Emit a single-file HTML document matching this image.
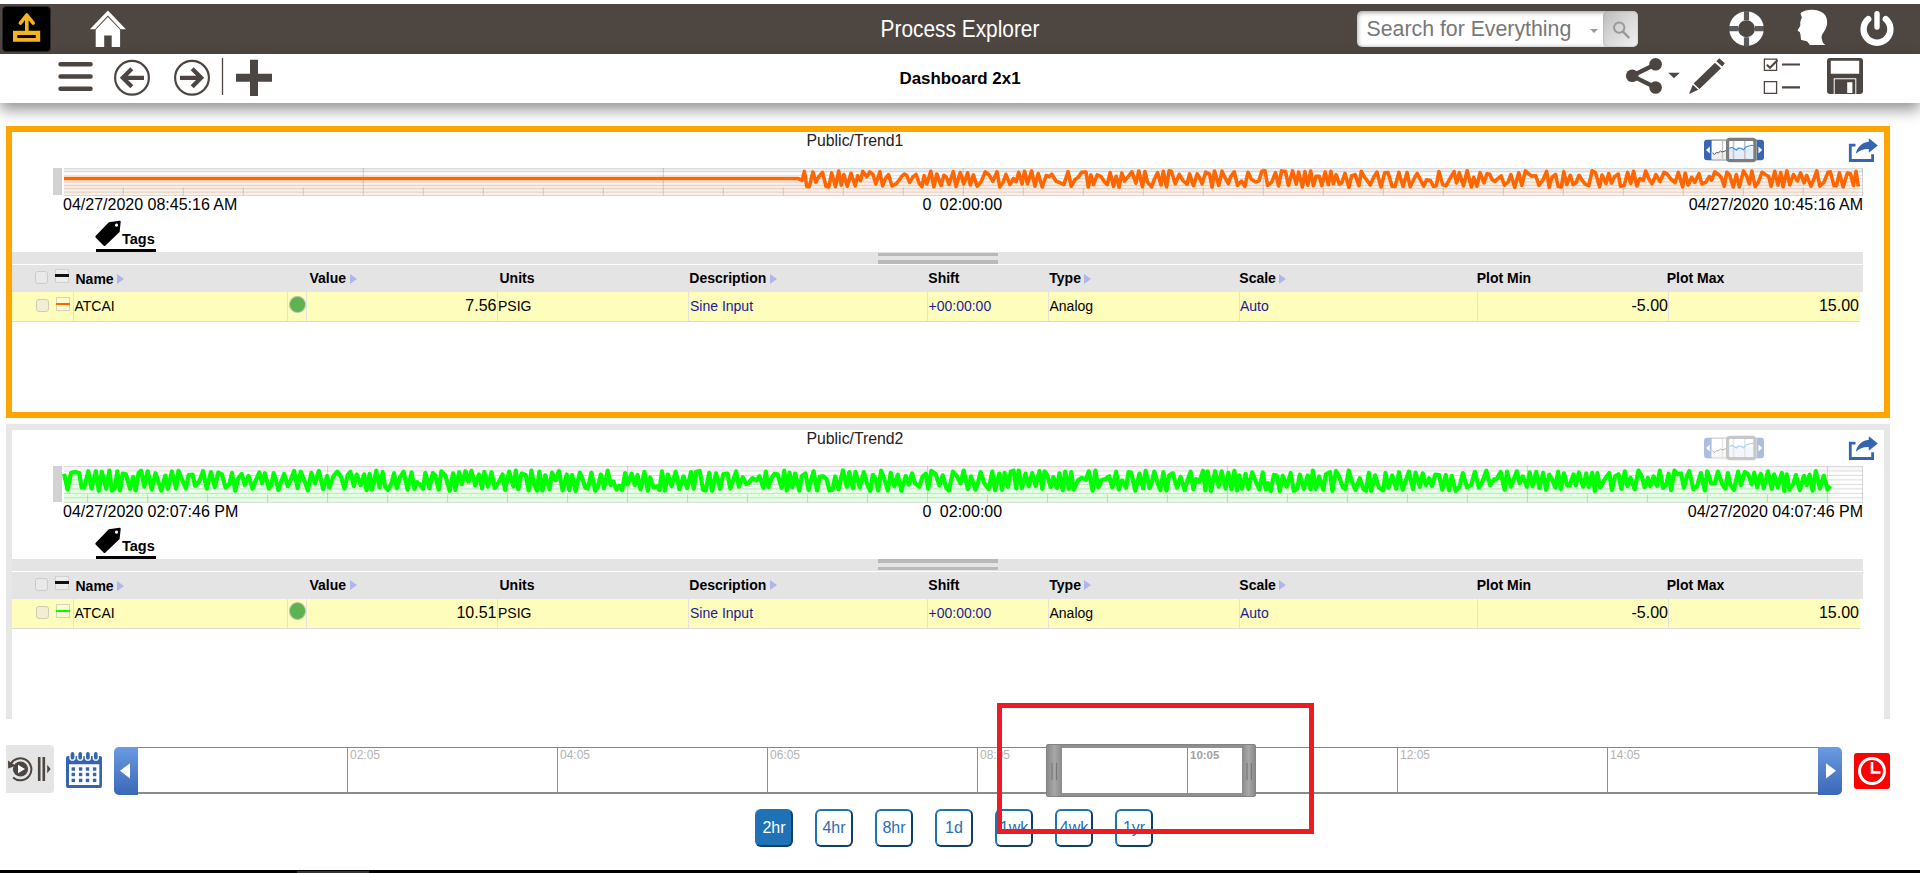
<!DOCTYPE html>
<html lang="en">
<head>
<meta charset="utf-8">
<title>Process Explorer</title>
<style>
*{box-sizing:border-box;margin:0;padding:0}
html,body{width:1920px;height:873px;overflow:hidden;background:#fff}
body{font-family:"Liberation Sans",sans-serif;color:#000;position:relative}
.abs{position:absolute}
svg{position:absolute;overflow:visible}
#topbar{position:absolute;left:0;top:4px;width:1920px;height:50px;background:#4e4640}
#upbtn{position:absolute;left:2px;top:2px;width:49px;height:46px;background:#000;border:1px solid #2c282a;border-radius:4px}
#apptitle{position:absolute;left:760px;top:13px;width:400px;text-align:center;color:#fff;font-size:24px;line-height:24px;transform:scaleX(.869);transform-origin:50% 50%;white-space:nowrap}
#search{position:absolute;left:1357px;top:7px;width:281px;height:36px;background:#fff;border-radius:5px;box-shadow:inset 0 1px 5px rgba(0,0,0,.45);overflow:hidden}
#search .ph{position:absolute;left:9.500px;top:6px;font-size:21.300px;line-height:24px;color:#777;white-space:nowrap}
#search .caret{position:absolute;left:233px;top:17.500px;width:0;height:0;border-left:4.500px solid transparent;border-right:4.500px solid transparent;border-top:4.500px solid #999}
#search .btn{position:absolute;left:246px;top:0;width:35px;height:36px;border-radius:5px;background:linear-gradient(135deg,#bcbcbc 0%,#d6d6d6 45%,#f2f2f2 100%);box-shadow:inset 0 0 2px rgba(0,0,0,.25)}
#subbar{position:absolute;left:0;top:54px;width:1920px;height:49px;background:#fff;box-shadow:0 7px 14px rgba(0,0,0,.42)}
#dashtitle{position:absolute;left:760px;top:70px;width:400px;text-align:center;font-weight:bold;font-size:16.900px;line-height:18px;color:#000}
.panel{position:absolute;left:6px;width:1884px;background:#fff;border:6px solid #ffa500}
.ptitle{position:absolute;font-size:15.800px;line-height:16px;color:#222;white-space:nowrap}
.dt{position:absolute;font-size:16px;line-height:16px;color:#000;white-space:nowrap}
.tags{position:absolute;font-weight:bold;font-size:14.500px;line-height:16px;color:#000}
.gband{position:absolute;left:12px;width:1851px;background:#e4e4e4}
.th{position:absolute;font-weight:bold;font-size:14px;line-height:14px;color:#000;white-space:nowrap}
.tri{display:inline-block;width:0;height:0;border-top:5.400px solid transparent;border-bottom:5.400px solid transparent;border-left:7px solid #aeb6ea;margin-left:3.500px;vertical-align:-0.500px}
.row{position:absolute;left:12px;width:1848px;height:30px;background:#fffdbb;border-bottom:1px solid #dcdcdc}
.vl{position:absolute;top:0;width:1px;height:29px;background:#e3e3da}
.td{position:absolute;font-size:14px;line-height:14px;color:#000;white-space:nowrap}
.num{position:absolute;font-size:16px;line-height:16px;color:#000;white-space:nowrap;text-align:right}
.lnk{color:#1a1a9e}
.cb{position:absolute;width:13px;height:13px;border:1px solid #cbcbcb;border-radius:3px;background:#e9e9e9}
.rbtn{position:absolute;top:809px;width:38px;height:38px;border:2px solid;border-color:#1f72b5 #0f3f6e #0f3f6e #1f72b5;border-radius:6px;background:#fff;color:#2a6db5;font-size:16px;line-height:34px;text-align:center}
.rbtn.on{background:#1f72b5;color:#fff}
.tick{position:absolute;top:748px;width:1px;height:45px;background:#8e8e8e}
.tl{position:absolute;top:748.700px;font-size:12px;line-height:12px;color:#b2b2b2;white-space:nowrap}
</style>
</head>
<body>

<!-- ===== top bar ===== -->
<div id="topbar">
  <div id="upbtn"></div>
  <svg style="left:0;top:-4px" width="160" height="58" viewBox="0 0 160 58">
    <!-- upload icon -->
    <g fill="none" stroke="#f2b422" stroke-width="3.6" stroke-linecap="round" stroke-linejoin="round">
      <path d="M26.800 31V15.200M20.400 23.200L26.800 15L33.200 23.200"/>
    </g>
    <path fill="#f2b422" fill-rule="evenodd" d="M13 30.8H40.2V41.8H13ZM17.3 35H35.8V38H17.3Z"/>
    <!-- home icon -->
    <path fill="#fff" d="M107.900 10.600L125.900 29.200H120.800L107.900 15.500L95 29.200H89.900Z"/>
    <path fill="#fff" fill-rule="evenodd" d="M107.900 17L120.100 29.800V47H95.700V29.800ZM104.2 35.4H111.7V47H104.2Z"/>
  </svg>
  <div id="apptitle">Process Explorer</div>
  <div id="search">
    <div class="ph">Search for Everything</div>
    <div class="caret"></div>
    <div class="btn"></div>
    <svg style="left:254px;top:8px" width="22" height="22" viewBox="0 0 22 22">
      <circle cx="8.2" cy="8.6" r="5.2" fill="none" stroke="#9a9a9a" stroke-width="2"/>
      <path d="M12 12.6L17.6 18.4" stroke="#9a9a9a" stroke-width="2.4" stroke-linecap="round"/>
    </svg>
  </div>
  <svg style="left:1720px;top:-4px" width="200" height="58" viewBox="1720 0 200 58">
    <!-- lifebuoy -->
    <circle cx="1746.5" cy="28.7" r="13" fill="none" stroke="#fff" stroke-width="9"/>
    <path d="M1746.500 11.200V20.200M1746.500 37.200V46.200M1729 28.700H1738M1755 28.700H1764" stroke="#5a5a5a" stroke-width="5.200" fill="none"/>
    <circle cx="1746.5" cy="28.7" r="17.6" fill="none" stroke="#444" stroke-opacity=".5" stroke-width="1"/>
    <!-- head -->
    <path fill="#fff" d="M1812.500 9.700C1808 9.600 1803.500 10.600 1801.300 12.600C1800.500 13.200 1800.600 13.800 1800.700 14.300L1801.900 17.500C1801 19.500 1800.400 21 1800.200 22.900L1800.300 25.700L1797.600 30.300C1797.800 31 1799 31.500 1799.900 32.300L1800.500 34.900L1801 39.200C1801.100 39.800 1801.300 40 1801.600 40.100L1806.800 41.200C1808 42 1809 43.500 1809.900 44.900L1825.400 44.900C1823.500 44 1822.500 42.500 1822.200 40.600C1821.800 39 1821.400 38 1821.600 36.600C1822 34 1824 32 1825.100 29.800C1826.500 27 1827.200 24.500 1827.100 22.300C1827.100 20.500 1826.900 19 1826.200 17.200C1825.300 15 1824 13.700 1822.200 12.600C1820.500 11.400 1818.800 10.800 1817 10.300C1815.500 9.900 1814 9.700 1812.500 9.700Z"/>
    <!-- power -->
    <path fill="none" stroke="#fff" stroke-width="6.4" stroke-linecap="round" d="M1868.2 19.200a13.400 13.400 0 1 0 17.600 0"/>
    <path fill="none" stroke="#fff" stroke-width="5.4" stroke-linecap="round" d="M1877 13.800V27"/>
  </svg>
</div>

<!-- ===== sub bar ===== -->
<div id="subbar"></div>
<svg style="left:0;top:54px" width="300" height="50" viewBox="0 54 300 50">
  <g stroke="#4d4541" fill="none">
    <path stroke-width="4.4" stroke-linecap="round" d="M60.500 64.300H90.600M60.500 76.500H90.600M60.500 88.800H90.600"/>
    <circle cx="132" cy="77.800" r="16.900" stroke-width="2.200"/>
    <path stroke-width="4.200" d="M144 77.800H123M131.800 68.800L122.800 77.800L131.800 86.800"/>
    <circle cx="192" cy="77.800" r="16.900" stroke-width="2.200"/>
    <path stroke-width="4.200" d="M180 77.800H201M192.200 68.800L201.200 77.800L192.200 86.800"/>
    <path stroke-width="1.300" d="M222.500 58V95"/>
    <path stroke-width="8" d="M236 77.800H272M254 59.800V96"/>
  </g>
</svg>
<div id="dashtitle">Dashboard 2x1</div>
<svg style="left:1600px;top:54px" width="300" height="50" viewBox="1600 54 300 50">
  <g fill="#4d4541" stroke="none">
    <!-- share -->
    <circle cx="1655.6" cy="64.200" r="6.300"/><circle cx="1632.200" cy="75.800" r="6.300"/><circle cx="1655.600" cy="87.500" r="6.300"/>
    <path fill="none" stroke="#4d4541" stroke-width="4.300" d="M1655.600 64.200L1632.200 75.800L1655.600 87.500"/>
    <path d="M1668.200 72.700H1679.800L1674 78.300Z"/>
    <!-- pencil -->
    <path d="M1719.300 58.300L1724.800 63.300L1722.300 66.600L1716.300 61.300ZM1715 62.800L1721 68.200L1699.500 88.900L1693.600 83.600ZM1692.800 84.800L1698.300 89.800L1689 94.100Z"/>
    <!-- checklist -->
    <path fill="none" stroke="#4d4541" stroke-width="1.300" d="M1764.400 59.200H1776.600V70.400H1764.400ZM1764.400 81.700H1776.600V93.300H1764.400Z"/>
    <path fill="none" stroke="#4d4541" stroke-width="2" d="M1766.800 64.800L1770 67.800L1777.600 60"/>
    <path fill="none" stroke="#4d4541" stroke-width="2.200" d="M1782 64.500H1800M1782 87.300H1800"/>
    <!-- save -->
    <path fill-rule="evenodd" d="M1830 58H1860a3 3 0 0 1 3 3V91a3 3 0 0 1-3 3H1830a3 3 0 0 1-3-3V61a3 3 0 0 1 3-3ZM1830.800 60.700H1859.200V73.700H1830.800ZM1833.700 78.300H1856.300V94H1833.700Z"/>
    <path fill-rule="evenodd" d="M1834.700 79.300H1855.300V94H1834.700ZM1847.200 82.300H1852.400V93H1847.200Z"/>
  </g>
</svg>

<!-- ===== panel 1 ===== -->
<div class="panel" style="top:126px;height:292px;border-color:#ffa500"></div>
<div class="ptitle" style="left:806.500px;top:132.5px">Public/Trend1</div>
<svg style="left:1700px;top:136px;opacity:1" width="70" height="30" viewBox="1700 136 70 30">
<rect x="1704" y="139.7" width="60" height="20.600" rx="3" fill="#3865b4"/>
<rect x="1711.700" y="139.7" width="44.800" height="20.600" fill="#9a9a9a"/>
<rect x="1711.700" y="140.8" width="44.800" height="18.500" fill="#fff"/>
<rect x="1711.700" y="152" width="16" height="7.300" fill="#eee"/>
<path d="M1722.500 141V159.3" stroke="#c4c4c4" stroke-width="1.300"/>
<path d="M1712.500 153L1714.500 154.5L1716.500 152.5L1718.500 152.8L1720.500 151L1722 152L1727 150.3" fill="none" stroke="#555" stroke-width="1"/>
<rect x="1729.500" y="148.5" width="24" height="11" fill="#e3edfb"/>
<path d="M1733.500 141V159.3M1744.800 141V159.3" stroke="#c4c4c4" stroke-width="1.600"/>
<path d="M1729.500 148.5L1731.500 147.3L1733.500 148.2L1736.500 150L1738.500 148L1741 148.3L1743.500 149.8L1746 147L1749 146L1752 145.3L1753.500 145.8" fill="none" stroke="#2b8cf0" stroke-width="1.100"/>
<rect x="1727.600" y="139.4" width="27.300" height="21.300" rx="2.500" fill="none" stroke="#7c7c7c" stroke-width="3.200"/>
<path d="M1706 150L1709.800 146.5V153.5ZM1762.200 150L1758.400 146.5V153.5Z" fill="#fff"/>
</svg>
<svg style="left:1846px;top:136px" width="36" height="30" viewBox="1846 136 36 30">
<path d="M1855.500 145.2H1850.300V160.5H1872.600V154.3" fill="none" stroke="#3565b0" stroke-width="2.800"/>
<path d="M1877.800 145.4L1868.800 138.2V141.8C1861.500 142.6 1857 147.5 1855.800 153.8C1859.500 150.3 1863.500 148.8 1868.800 149V152.8Z" fill="#3565b0"/>
</svg>
<div class="abs" style="left:52.500px;top:168px;width:9.500px;height:27.0px;background:#d2d2d2"></div>
<svg style="left:64px;top:168px" width="1799" height="28.5" viewBox="0 0 1799 28.5">
<rect x="0" y="0" width="1799" height="27.5" fill="#fff"/>
<rect x="0" y="1" width="1799" height="3" fill="#ececec"/>
<polygon points="0.0,10.5 734.0,10.5 738.0,12.4 740.4,3.4 742.8,18.5 745.3,18.6 748.9,4.0 751.9,14.2 754.5,9.2 758.5,4.3 762.0,18.3 764.8,18.9 767.7,4.9 771.4,18.6 774.7,3.1 777.3,17.1 779.9,6.6 783.3,18.2 787.0,5.3 791.2,17.8 793.6,7.8 796.5,12.6 798.8,3.4 802.7,8.7 805.8,3.9 809.0,6.4 811.8,16.0 815.9,3.8 818.6,17.9 821.5,10.3 824.5,6.6 828.0,18.0 832.1,15.9 835.2,12.2 837.7,8.3 840.3,6.1 842.6,7.3 845.6,14.4 849.1,8.7 852.1,6.5 855.4,15.6 857.9,18.7 860.2,7.7 862.8,16.0 866.8,3.3 869.9,18.8 872.8,6.0 877.1,17.5 879.9,7.3 882.2,9.0 885.0,16.4 889.3,3.6 892.1,18.6 896.2,4.5 899.8,15.9 903.6,4.8 906.3,16.9 909.4,6.9 913.1,18.2 917.0,14.0 921.3,3.9 924.7,6.5 928.9,13.2 933.0,3.8 935.8,19.0 938.9,14.8 941.9,6.3 946.0,16.5 949.4,10.5 952.1,13.7 954.7,4.3 958.1,15.9 960.6,3.2 963.5,15.8 967.6,3.0 970.9,18.2 974.2,5.5 978.2,19.0 982.2,7.5 985.4,8.6 987.8,6.2 991.9,13.0 995.5,14.5 999.8,16.7 1004.1,3.6 1007.2,18.3 1011.0,11.5 1014.1,9.5 1017.7,4.3 1022.0,4.0 1024.3,19.0 1026.9,6.9 1029.5,16.6 1033.2,6.9 1036.9,8.4 1040.8,14.3 1043.2,16.5 1046.2,4.7 1049.5,18.3 1052.2,8.3 1055.1,19.1 1057.8,5.0 1060.6,13.1 1064.0,8.9 1067.9,3.8 1071.9,15.2 1074.8,3.0 1078.4,18.7 1080.9,3.5 1083.5,14.1 1087.5,18.8 1090.7,10.5 1093.6,4.7 1097.0,17.0 1099.3,3.3 1102.6,18.9 1105.1,2.8 1107.4,3.2 1111.2,15.7 1115.3,6.3 1119.0,12.5 1123.0,16.2 1125.6,5.9 1129.5,17.6 1133.2,5.9 1135.6,9.7 1138.1,15.8 1141.7,4.1 1145.6,6.0 1148.1,19.1 1150.5,3.0 1154.8,17.4 1158.0,3.2 1160.5,8.7 1164.3,15.6 1166.6,8.9 1170.2,3.8 1173.5,17.3 1177.5,13.1 1180.8,18.4 1184.0,4.4 1187.4,11.2 1191.6,13.9 1194.9,13.1 1197.7,3.4 1201.0,2.9 1203.6,17.2 1207.4,14.6 1211.5,4.6 1214.6,17.9 1217.6,2.9 1221.6,3.6 1224.4,17.5 1228.6,2.9 1232.2,16.1 1234.6,4.0 1238.4,19.0 1240.9,3.6 1243.8,17.2 1246.7,3.1 1249.4,17.7 1252.1,8.3 1255.3,8.2 1257.8,17.6 1261.2,3.9 1264.4,16.7 1266.8,3.2 1269.3,15.6 1272.2,6.6 1275.4,16.1 1277.7,14.9 1281.0,5.4 1284.9,19.2 1287.7,7.8 1291.1,6.7 1294.9,17.7 1297.3,3.4 1300.2,8.7 1303.8,13.3 1306.2,16.9 1309.7,9.2 1312.9,4.1 1317.0,19.0 1320.7,4.8 1324.0,4.6 1328.1,18.2 1331.1,18.5 1334.9,4.4 1339.1,18.4 1343.0,4.5 1346.2,18.7 1350.4,10.0 1353.2,5.5 1355.6,10.0 1359.7,18.2 1362.6,11.8 1366.4,12.5 1369.5,18.4 1372.3,17.8 1374.9,3.5 1378.8,16.8 1382.1,17.7 1386.2,10.2 1390.1,3.6 1392.5,14.9 1395.3,4.7 1399.5,17.8 1403.2,2.8 1407.4,19.0 1409.7,9.3 1412.8,18.2 1416.1,4.7 1420.0,14.9 1423.0,5.8 1425.7,6.3 1428.1,11.5 1431.0,13.4 1433.5,11.0 1437.2,8.0 1440.4,17.2 1444.0,14.1 1446.9,6.7 1450.7,19.2 1454.7,4.8 1457.8,17.3 1461.4,2.9 1464.7,5.9 1467.6,8.1 1471.8,7.7 1474.9,17.3 1479.0,11.9 1482.6,3.4 1485.2,19.1 1487.9,9.4 1491.5,6.3 1494.2,18.3 1497.3,18.9 1499.8,3.7 1502.7,16.7 1506.2,7.3 1509.2,16.6 1511.9,14.7 1515.0,7.3 1517.7,11.5 1521.2,16.2 1524.8,17.7 1528.1,2.8 1531.4,4.5 1535.6,18.8 1538.0,7.1 1542.0,15.5 1544.7,5.6 1547.4,15.1 1550.5,8.7 1554.3,6.1 1556.6,18.3 1560.1,17.6 1563.6,4.4 1566.8,15.6 1569.6,3.3 1572.8,18.0 1575.9,10.5 1579.3,12.3 1581.7,3.0 1585.0,11.0 1588.1,15.8 1591.9,6.7 1596.1,13.6 1600.0,4.4 1603.0,5.8 1606.9,11.0 1611.1,14.5 1614.4,4.4 1618.6,18.8 1621.2,5.2 1624.2,17.1 1627.7,9.3 1630.8,14.2 1635.0,5.7 1637.7,15.8 1641.6,14.4 1645.3,8.6 1647.6,12.1 1650.8,3.9 1654.4,6.4 1657.4,9.7 1660.2,18.3 1662.9,4.2 1665.7,7.3 1669.2,19.0 1672.3,6.6 1675.3,18.9 1679.5,2.9 1682.9,8.5 1685.3,15.9 1687.9,3.1 1691.2,18.6 1694.1,14.6 1698.0,4.3 1702.0,7.0 1704.7,8.5 1707.1,18.3 1710.8,3.3 1713.9,17.2 1716.8,4.6 1719.1,18.8 1722.9,2.9 1725.8,16.9 1729.4,6.5 1733.4,12.9 1736.6,4.8 1740.1,14.8 1742.7,7.4 1746.9,18.2 1749.2,12.8 1752.8,2.9 1755.8,18.2 1759.9,14.4 1764.0,4.2 1766.4,3.9 1770.0,17.7 1772.5,17.6 1775.4,4.8 1779.1,18.9 1783.4,5.0 1786.5,5.7 1789.5,17.4 1792.0,3.2 1794.3,18.6 1794.3,27.5 0.0,27.5" fill="rgba(255,102,0,.11)"/>
<path d="M0 0.50H1799M0 3.88H1799M0 7.25H1799M0 10.62H1799M0 14.00H1799M0 17.38H1799M0 20.75H1799M0 24.12H1799M0 27.50H1799" stroke="#808080" stroke-opacity=".28" stroke-width="1" fill="none"/>
<path d="M299.3 0V27.5M599.3 0V27.5M899.3 0V27.5M1199.3 0V27.5M1499.3 0V27.5M59.3 19.5V27.5M119.3 19.5V27.5M179.3 19.5V27.5M239.3 19.5V27.5M299.3 19.5V27.5M359.3 19.5V27.5M419.3 19.5V27.5M479.3 19.5V27.5M539.3 19.5V27.5M599.3 19.5V27.5M659.3 19.5V27.5M719.3 19.5V27.5M779.3 19.5V27.5M839.3 19.5V27.5M899.3 19.5V27.5M959.3 19.5V27.5M1019.3 19.5V27.5M1079.3 19.5V27.5M1139.3 19.5V27.5M1199.3 19.5V27.5M1259.3 19.5V27.5M1319.3 19.5V27.5M1379.3 19.5V27.5M1439.3 19.5V27.5M1499.3 19.5V27.5M1559.3 19.5V27.5M1619.3 19.5V27.5M1679.3 19.5V27.5M1739.3 19.5V27.5" stroke="#808080" stroke-opacity=".3" stroke-width="1.100" fill="none"/>
<path d="M1798.5 0V27.5" stroke="#808080" stroke-opacity=".3" stroke-width="1" fill="none"/>
<polyline points="0.0,10.5 734.0,10.5 738.0,12.4 740.4,3.4 742.8,18.5 745.3,18.6 748.9,4.0 751.9,14.2 754.5,9.2 758.5,4.3 762.0,18.3 764.8,18.9 767.7,4.9 771.4,18.6 774.7,3.1 777.3,17.1 779.9,6.6 783.3,18.2 787.0,5.3 791.2,17.8 793.6,7.8 796.5,12.6 798.8,3.4 802.7,8.7 805.8,3.9 809.0,6.4 811.8,16.0 815.9,3.8 818.6,17.9 821.5,10.3 824.5,6.6 828.0,18.0 832.1,15.9 835.2,12.2 837.7,8.3 840.3,6.1 842.6,7.3 845.6,14.4 849.1,8.7 852.1,6.5 855.4,15.6 857.9,18.7 860.2,7.7 862.8,16.0 866.8,3.3 869.9,18.8 872.8,6.0 877.1,17.5 879.9,7.3 882.2,9.0 885.0,16.4 889.3,3.6 892.1,18.6 896.2,4.5 899.8,15.9 903.6,4.8 906.3,16.9 909.4,6.9 913.1,18.2 917.0,14.0 921.3,3.9 924.7,6.5 928.9,13.2 933.0,3.8 935.8,19.0 938.9,14.8 941.9,6.3 946.0,16.5 949.4,10.5 952.1,13.7 954.7,4.3 958.1,15.9 960.6,3.2 963.5,15.8 967.6,3.0 970.9,18.2 974.2,5.5 978.2,19.0 982.2,7.5 985.4,8.6 987.8,6.2 991.9,13.0 995.5,14.5 999.8,16.7 1004.1,3.6 1007.2,18.3 1011.0,11.5 1014.1,9.5 1017.7,4.3 1022.0,4.0 1024.3,19.0 1026.9,6.9 1029.5,16.6 1033.2,6.9 1036.9,8.4 1040.8,14.3 1043.2,16.5 1046.2,4.7 1049.5,18.3 1052.2,8.3 1055.1,19.1 1057.8,5.0 1060.6,13.1 1064.0,8.9 1067.9,3.8 1071.9,15.2 1074.8,3.0 1078.4,18.7 1080.9,3.5 1083.5,14.1 1087.5,18.8 1090.7,10.5 1093.6,4.7 1097.0,17.0 1099.3,3.3 1102.6,18.9 1105.1,2.8 1107.4,3.2 1111.2,15.7 1115.3,6.3 1119.0,12.5 1123.0,16.2 1125.6,5.9 1129.5,17.6 1133.2,5.9 1135.6,9.7 1138.1,15.8 1141.7,4.1 1145.6,6.0 1148.1,19.1 1150.5,3.0 1154.8,17.4 1158.0,3.2 1160.5,8.7 1164.3,15.6 1166.6,8.9 1170.2,3.8 1173.5,17.3 1177.5,13.1 1180.8,18.4 1184.0,4.4 1187.4,11.2 1191.6,13.9 1194.9,13.1 1197.7,3.4 1201.0,2.9 1203.6,17.2 1207.4,14.6 1211.5,4.6 1214.6,17.9 1217.6,2.9 1221.6,3.6 1224.4,17.5 1228.6,2.9 1232.2,16.1 1234.6,4.0 1238.4,19.0 1240.9,3.6 1243.8,17.2 1246.7,3.1 1249.4,17.7 1252.1,8.3 1255.3,8.2 1257.8,17.6 1261.2,3.9 1264.4,16.7 1266.8,3.2 1269.3,15.6 1272.2,6.6 1275.4,16.1 1277.7,14.9 1281.0,5.4 1284.9,19.2 1287.7,7.8 1291.1,6.7 1294.9,17.7 1297.3,3.4 1300.2,8.7 1303.8,13.3 1306.2,16.9 1309.7,9.2 1312.9,4.1 1317.0,19.0 1320.7,4.8 1324.0,4.6 1328.1,18.2 1331.1,18.5 1334.9,4.4 1339.1,18.4 1343.0,4.5 1346.2,18.7 1350.4,10.0 1353.2,5.5 1355.6,10.0 1359.7,18.2 1362.6,11.8 1366.4,12.5 1369.5,18.4 1372.3,17.8 1374.9,3.5 1378.8,16.8 1382.1,17.7 1386.2,10.2 1390.1,3.6 1392.5,14.9 1395.3,4.7 1399.5,17.8 1403.2,2.8 1407.4,19.0 1409.7,9.3 1412.8,18.2 1416.1,4.7 1420.0,14.9 1423.0,5.8 1425.7,6.3 1428.1,11.5 1431.0,13.4 1433.5,11.0 1437.2,8.0 1440.4,17.2 1444.0,14.1 1446.9,6.7 1450.7,19.2 1454.7,4.8 1457.8,17.3 1461.4,2.9 1464.7,5.9 1467.6,8.1 1471.8,7.7 1474.9,17.3 1479.0,11.9 1482.6,3.4 1485.2,19.1 1487.9,9.4 1491.5,6.3 1494.2,18.3 1497.3,18.9 1499.8,3.7 1502.7,16.7 1506.2,7.3 1509.2,16.6 1511.9,14.7 1515.0,7.3 1517.7,11.5 1521.2,16.2 1524.8,17.7 1528.1,2.8 1531.4,4.5 1535.6,18.8 1538.0,7.1 1542.0,15.5 1544.7,5.6 1547.4,15.1 1550.5,8.7 1554.3,6.1 1556.6,18.3 1560.1,17.6 1563.6,4.4 1566.8,15.6 1569.6,3.3 1572.8,18.0 1575.9,10.5 1579.3,12.3 1581.7,3.0 1585.0,11.0 1588.1,15.8 1591.9,6.7 1596.1,13.6 1600.0,4.4 1603.0,5.8 1606.9,11.0 1611.1,14.5 1614.4,4.4 1618.6,18.8 1621.2,5.2 1624.2,17.1 1627.7,9.3 1630.8,14.2 1635.0,5.7 1637.7,15.8 1641.6,14.4 1645.3,8.6 1647.6,12.1 1650.8,3.9 1654.4,6.4 1657.4,9.7 1660.2,18.3 1662.9,4.2 1665.7,7.3 1669.2,19.0 1672.3,6.6 1675.3,18.9 1679.5,2.9 1682.9,8.5 1685.3,15.9 1687.9,3.1 1691.2,18.6 1694.1,14.6 1698.0,4.3 1702.0,7.0 1704.7,8.5 1707.1,18.3 1710.8,3.3 1713.9,17.2 1716.8,4.6 1719.1,18.8 1722.9,2.9 1725.8,16.9 1729.4,6.5 1733.4,12.9 1736.6,4.8 1740.1,14.8 1742.7,7.4 1746.9,18.2 1749.2,12.8 1752.8,2.9 1755.8,18.2 1759.9,14.4 1764.0,4.2 1766.4,3.9 1770.0,17.7 1772.5,17.6 1775.4,4.8 1779.1,18.9 1783.4,5.0 1786.5,5.7 1789.5,17.4 1792.0,3.2 1794.3,18.6" fill="none" stroke="#ff6600" stroke-width="3.6" stroke-linejoin="round" stroke-linecap="butt"/>
</svg>
<div class="dt" style="left:63px;top:197.0px">04/27/2020 08:45:16 AM</div>
<div class="dt" style="left:922.500px;top:197.0px;word-spacing:4px">0 02:00:00</div>
<div class="dt" style="right:57px;top:197.0px">04/27/2020 10:45:16 AM</div>
<svg style="left:94px;top:220.0px" width="30" height="28" viewBox="0 0 30 28"><path fill-rule="evenodd" d="M14.800 2.200L25.400 .8a1.200 1.200 0 0 1 1.300 1.300L25.600 12L11.500 25.600a1.400 1.400 0 0 1-2 0L1.800 17.800a1.400 1.400 0 0 1 0-2ZM22.500 3.600a1.600 1.600 0 1 0 .01 0Z" fill="#000"/></svg>
<div class="tags" style="left:122px;top:231.0px">Tags</div>
<div class="abs" style="left:96px;top:249.0px;width:60px;height:3px;background:#000"></div>
<div class="gband" style="top:252.0px;height:12px"></div>
<div class="abs" style="left:878px;top:252.5px;width:120px;height:3.500px;background:#b9b9b9"></div>
<div class="abs" style="left:878px;top:260.0px;width:120px;height:3.500px;background:#b9b9b9"></div>
<div class="gband" style="top:265.3px;height:26.500px"></div>
<div class="cb" style="left:35px;top:271.3px"></div>
<div class="abs" style="left:54.500px;top:269.3px;width:14.500px;height:14px;background:#ececec;border:1px solid #d0d0d0"></div>
<div class="abs" style="left:54.500px;top:274.3px;width:14.500px;height:3px;background:#111"></div>
<div class="th" style="left:75.5px;top:271.8px">Name<i class="tri"></i></div>
<div class="th" style="left:309.5px;top:271.1px">Value<i class="tri"></i></div>
<div class="th" style="left:499.5px;top:271.1px">Units</div>
<div class="th" style="left:689.3px;top:271.1px">Description<i class="tri"></i></div>
<div class="th" style="left:928.3px;top:271.1px">Shift</div>
<div class="th" style="left:1049.3px;top:271.1px">Type<i class="tri"></i></div>
<div class="th" style="left:1239.3px;top:271.1px">Scale<i class="tri"></i></div>
<div class="th" style="left:1476.7px;top:271.1px">Plot Min</div>
<div class="th" style="left:1666.7px;top:271.1px">Plot Max</div>
<div class="row" style="top:291.8px">
<i class="vl" style="left:61px"></i>
<i class="vl" style="left:275px"></i>
<i class="vl" style="left:294px"></i>
<i class="vl" style="left:485px"></i>
<i class="vl" style="left:676px"></i>
<i class="vl" style="left:915px"></i>
<i class="vl" style="left:1036px"></i>
<i class="vl" style="left:1227px"></i>
<i class="vl" style="left:1465px"></i>
<i class="vl" style="left:1656px"></i>
</div>
<div class="cb" style="left:36px;top:299.3px;background:#f1eed2;border-color:#cfcdb8"></div>
<div class="abs" style="left:55.500px;top:297.3px;width:14px;height:14px;background:#fdfad0;border:1px solid #d6d4b8"></div>
<div class="abs" style="left:55.500px;top:302.8px;width:14px;height:2.600px;background:#ff6600"></div>
<div class="td" style="left:74.500px;top:299.0px">ATCAI</div>
<div class="abs" style="left:288.500px;top:295.6px;width:17px;height:17.400px;border-radius:50%;background:#5cb350;border:1px solid #c2c2b4"></div>
<div class="num" style="right:1423.5px;top:298.3px">7.56</div>
<div class="td" style="left:498px;top:299.0px">PSIG</div>
<div class="td lnk" style="left:690px;top:299.0px">Sine Input</div>
<div class="td lnk" style="left:928.500px;top:299.0px">+00:00:00</div>
<div class="td" style="left:1049.500px;top:299.0px">Analog</div>
<div class="td lnk" style="left:1240px;top:299.0px">Auto</div>
<div class="num" style="right:252px;top:298.3px">-5.00</div>
<div class="num" style="right:61px;top:298.3px">15.00</div>

<!-- ===== panel 2 (clipped at y=719) ===== -->
<div class="abs" style="left:0;top:0;width:1920px;height:719px;overflow:hidden;pointer-events:none">
<div class="panel" style="top:424px;height:320px;border-color:#e7e7e7"></div>
<div class="ptitle" style="left:806.500px;top:430.5px">Public/Trend2</div>
<svg style="left:1700px;top:434px;opacity:0.42" width="70" height="30" viewBox="1700 434 70 30">
<rect x="1704" y="437.7" width="60" height="20.600" rx="3" fill="#3865b4"/>
<rect x="1711.700" y="437.7" width="44.800" height="20.600" fill="#9a9a9a"/>
<rect x="1711.700" y="438.8" width="44.800" height="18.500" fill="#fff"/>
<rect x="1711.700" y="450" width="16" height="7.300" fill="#eee"/>
<path d="M1722.500 439V457.3" stroke="#c4c4c4" stroke-width="1.300"/>
<path d="M1712.500 451L1714.500 452.5L1716.500 450.5L1718.500 450.8L1720.500 449L1722 450L1727 448.3" fill="none" stroke="#555" stroke-width="1"/>
<rect x="1729.500" y="446.5" width="24" height="11" fill="#e3edfb"/>
<path d="M1733.500 439V457.3M1744.800 439V457.3" stroke="#c4c4c4" stroke-width="1.600"/>
<path d="M1729.500 446.5L1731.500 445.3L1733.500 446.2L1736.500 448L1738.500 446L1741 446.3L1743.500 447.8L1746 445L1749 444L1752 443.3L1753.500 443.8" fill="none" stroke="#2b8cf0" stroke-width="1.100"/>
<rect x="1727.600" y="437.4" width="27.300" height="21.300" rx="2.500" fill="none" stroke="#7c7c7c" stroke-width="3.200"/>
<path d="M1706 448L1709.800 444.5V451.5ZM1762.200 448L1758.400 444.5V451.5Z" fill="#fff"/>
</svg>
<svg style="left:1846px;top:434px" width="36" height="30" viewBox="1846 434 36 30">
<path d="M1855.500 443.2H1850.300V458.5H1872.600V452.3" fill="none" stroke="#3565b0" stroke-width="2.800"/>
<path d="M1877.800 443.4L1868.800 436.2V439.8C1861.500 440.6 1857 445.5 1855.800 451.8C1859.500 448.3 1863.500 446.8 1868.800 447V450.8Z" fill="#3565b0"/>
</svg>
<div class="abs" style="left:52.500px;top:466px;width:9.500px;height:35.8px;background:#d2d2d2"></div>
<svg style="left:64px;top:466px" width="1799" height="37.3" viewBox="0 0 1799 37.3">
<rect x="0" y="0" width="1799" height="36.3" fill="#fff"/>
<rect x="0" y="1" width="1799" height="3" fill="#f6f6f6"/>
<polygon points="0.0,7.8 3.5,23.4 7.0,6.8 11.0,6.1 15.2,7.1 17.5,21.3 20.2,21.5 24.2,5.2 27.5,22.5 31.8,5.2 34.7,24.8 37.8,5.7 42.1,22.8 45.3,4.5 47.7,24.6 50.7,22.5 53.2,5.4 55.9,24.4 58.6,7.7 61.7,8.0 66.0,22.8 69.0,11.0 71.5,24.5 74.5,7.0 77.0,4.7 80.2,20.6 83.6,5.3 87.6,23.4 91.4,7.2 94.9,17.5 97.2,24.7 101.2,9.6 103.8,22.9 107.8,5.5 112.0,22.5 114.4,4.8 117.8,13.2 121.9,22.3 124.5,9.2 128.6,8.7 131.0,19.8 135.3,15.3 139.0,5.1 142.7,22.5 146.9,6.1 150.7,21.0 154.2,6.5 157.8,8.4 161.5,21.5 165.5,17.7 167.9,6.9 171.2,24.8 174.0,12.5 177.6,8.0 180.8,18.8 184.5,9.9 188.5,22.6 191.5,14.8 195.4,6.4 198.1,17.3 200.8,7.2 204.8,22.4 207.2,19.1 209.6,7.1 211.9,14.3 214.3,23.9 216.9,16.3 220.1,7.9 223.7,20.2 226.4,14.5 230.1,4.9 233.5,22.1 236.6,5.7 240.3,14.3 243.8,24.3 247.3,6.8 250.9,17.5 254.8,5.0 259.1,22.9 263.0,10.0 265.4,21.6 269.3,10.4 273.2,5.6 277.0,10.7 280.4,22.4 283.7,8.8 286.4,5.8 289.8,19.9 292.7,8.5 296.7,19.2 300.1,8.3 302.5,24.2 305.6,8.0 308.0,23.6 312.2,4.9 315.4,21.4 318.6,6.1 321.2,20.8 323.9,24.0 327.4,17.5 330.0,7.2 332.7,22.1 336.0,11.4 339.6,5.7 343.6,23.6 347.5,6.4 350.4,22.8 353.0,16.1 355.8,18.6 359.0,22.7 361.3,6.9 365.4,22.2 368.7,7.1 371.2,9.5 374.6,23.4 377.3,5.3 381.4,9.7 385.6,24.8 389.0,7.4 391.3,23.9 395.1,6.2 397.7,18.2 401.4,5.2 404.5,15.7 407.4,4.8 411.2,19.3 414.9,8.4 418.0,22.4 420.3,5.8 423.9,20.5 427.5,6.2 430.6,21.9 434.8,16.1 438.6,8.5 441.0,24.0 445.1,5.6 449.4,20.4 451.8,4.6 454.2,23.1 457.5,7.6 461.7,8.9 464.6,24.4 467.4,4.7 469.8,17.7 472.9,24.6 475.3,5.7 478.4,24.7 481.2,9.4 485.5,23.1 488.0,6.6 491.4,14.1 495.0,5.1 498.5,24.4 502.7,8.5 505.2,24.1 508.1,9.0 511.5,25.1 515.8,6.6 518.2,12.2 521.3,21.8 523.8,22.6 527.4,6.7 531.2,24.8 533.7,21.1 536.8,8.5 539.9,22.2 543.7,4.7 546.7,19.1 549.2,15.5 552.4,23.4 555.2,19.7 558.1,24.2 561.1,7.0 563.6,18.4 567.7,7.6 570.7,18.9 573.5,9.0 576.5,23.4 580.4,5.9 583.8,24.7 586.1,11.3 589.6,21.6 593.0,20.3 595.4,24.0 598.0,5.3 600.8,24.7 603.9,8.5 607.5,20.0 611.7,5.7 615.3,23.0 619.5,10.4 623.2,22.1 627.0,6.1 629.7,22.7 632.1,5.7 635.7,5.0 639.1,24.0 641.7,24.6 645.2,6.9 648.0,25.0 652.0,7.3 656.0,22.8 659.3,8.0 663.5,7.5 666.3,22.4 669.1,14.5 672.2,5.5 674.8,20.7 678.8,11.3 682.2,17.9 684.5,17.2 688.4,12.1 692.2,14.6 695.4,10.1 699.3,21.7 701.8,5.6 704.4,21.1 707.3,12.6 710.5,7.7 713.6,8.4 717.6,21.9 720.3,4.7 722.7,24.4 725.5,6.6 728.4,21.3 731.1,7.6 735.3,24.6 737.8,10.1 741.5,7.4 744.6,23.9 747.2,13.7 749.6,5.3 753.0,24.5 755.9,10.6 759.0,10.3 762.5,12.9 765.5,24.4 768.6,23.6 771.2,10.5 774.6,23.3 778.9,4.5 782.8,20.7 785.3,6.1 789.0,22.3 791.5,5.8 795.7,21.2 799.8,6.1 803.3,18.5 806.2,24.9 808.8,8.8 811.2,12.3 814.1,24.5 817.2,4.7 820.4,13.5 823.8,24.5 826.7,6.8 830.3,20.1 833.8,8.6 837.4,24.8 841.7,10.0 844.8,18.6 848.1,7.4 851.1,17.4 855.2,20.6 858.6,10.5 861.8,7.7 864.2,22.7 867.3,4.9 871.5,7.8 875.4,19.4 878.8,9.3 882.2,21.7 885.0,24.6 888.9,5.6 892.4,9.4 896.5,17.4 899.7,4.6 903.9,23.0 907.1,10.4 911.4,23.7 913.8,17.4 916.7,6.1 920.4,17.1 924.6,23.0 928.3,5.6 931.1,24.3 935.2,7.6 938.1,23.8 940.6,6.8 943.9,20.8 946.7,5.8 949.6,4.6 952.3,22.4 954.6,4.5 957.9,21.9 961.5,7.6 964.8,20.3 968.2,7.1 971.7,20.0 975.5,5.1 978.3,22.8 980.6,5.4 983.3,9.2 986.6,20.9 989.4,11.0 992.8,21.9 995.4,7.3 998.8,24.3 1001.2,5.7 1004.9,22.9 1007.3,6.0 1009.7,23.4 1014.0,14.3 1017.8,11.8 1021.9,13.6 1024.8,5.3 1028.6,24.7 1031.4,4.7 1034.4,21.4 1037.9,13.7 1041.5,13.0 1045.2,10.3 1048.3,21.4 1052.2,5.7 1054.8,23.4 1058.0,14.4 1062.1,21.7 1064.5,6.2 1067.2,6.5 1071.3,24.7 1075.5,7.6 1079.2,22.2 1081.7,4.9 1085.6,22.0 1087.9,15.9 1090.3,5.6 1093.7,17.2 1096.5,24.2 1099.4,6.1 1102.4,24.7 1105.2,9.3 1108.7,7.2 1113.0,21.6 1116.7,11.0 1120.7,24.1 1123.8,13.5 1126.7,5.6 1129.4,23.1 1132.1,13.0 1135.3,15.8 1139.0,4.8 1141.3,24.3 1143.7,5.4 1147.0,25.1 1151.1,5.2 1154.7,20.6 1157.7,5.4 1161.6,22.6 1164.4,6.8 1167.5,23.4 1170.4,4.9 1173.0,24.4 1175.3,9.4 1178.1,22.7 1181.5,7.9 1184.5,22.9 1188.2,6.4 1192.1,16.2 1195.4,23.3 1198.8,6.5 1201.7,23.4 1204.1,17.2 1206.7,25.0 1209.9,8.9 1212.7,9.5 1215.8,25.0 1218.8,9.7 1222.7,20.6 1226.7,7.0 1229.8,24.8 1233.2,23.0 1235.8,8.6 1240.0,22.8 1243.7,9.5 1246.6,23.4 1248.9,4.6 1252.0,23.1 1255.1,10.5 1259.3,23.7 1261.9,8.4 1266.1,6.2 1268.4,25.0 1272.0,5.0 1274.8,9.8 1278.9,21.4 1281.5,22.9 1284.8,4.5 1287.9,15.4 1291.5,23.8 1295.8,12.2 1299.5,23.1 1302.0,24.8 1304.9,6.8 1307.2,25.0 1311.1,9.3 1315.0,21.6 1319.2,24.4 1321.5,6.9 1324.6,21.8 1328.2,9.5 1332.3,22.6 1335.0,6.2 1338.7,23.7 1341.8,14.8 1344.9,5.6 1349.1,23.0 1351.6,6.5 1355.9,20.8 1358.7,7.3 1361.7,18.9 1365.2,12.3 1368.0,20.2 1371.3,8.7 1375.2,9.2 1378.3,23.7 1381.8,9.0 1385.2,24.2 1387.8,9.9 1391.6,24.9 1395.6,20.5 1398.9,7.1 1402.9,21.1 1407.2,19.1 1410.9,5.8 1414.9,21.7 1418.5,15.4 1422.4,4.8 1426.2,19.2 1430.1,13.3 1432.6,13.0 1436.7,6.0 1440.7,23.7 1443.1,5.7 1446.9,20.6 1450.0,12.9 1452.9,5.3 1455.6,17.0 1458.8,10.4 1463.0,20.7 1465.7,6.4 1468.6,20.1 1472.2,5.9 1475.5,22.0 1479.2,6.9 1482.1,23.8 1485.3,8.6 1488.5,13.9 1491.4,21.6 1494.2,5.7 1496.8,22.9 1500.0,7.3 1503.3,19.4 1505.8,19.3 1509.6,8.4 1511.9,19.2 1514.9,6.5 1519.2,20.6 1522.3,7.5 1524.7,21.0 1528.3,6.8 1530.9,25.0 1533.4,7.2 1536.2,21.4 1540.0,14.4 1542.4,11.1 1545.4,6.9 1547.9,23.9 1551.3,10.1 1554.6,8.2 1557.4,22.9 1560.9,5.3 1563.4,20.2 1566.5,11.7 1570.7,23.2 1574.5,4.6 1577.8,10.3 1580.7,21.1 1583.9,12.0 1586.4,20.1 1589.7,10.5 1593.0,19.9 1595.9,4.7 1599.1,21.9 1602.3,18.7 1604.7,7.7 1607.2,24.1 1610.5,4.5 1613.6,8.3 1617.1,7.5 1620.0,21.8 1622.9,10.0 1625.4,5.1 1629.3,23.0 1633.0,20.4 1636.9,7.1 1640.9,24.4 1643.3,5.4 1647.4,17.5 1650.9,17.5 1654.0,5.6 1658.2,18.0 1661.3,22.5 1663.9,7.0 1666.3,18.7 1670.0,23.8 1674.2,5.6 1676.9,19.0 1680.9,5.9 1684.1,8.0 1687.8,18.4 1690.3,6.7 1693.3,21.3 1696.8,7.8 1699.8,22.3 1704.0,5.3 1707.8,22.8 1710.2,8.3 1713.8,21.5 1717.9,6.9 1720.4,24.9 1722.8,8.3 1725.4,23.4 1729.3,18.1 1732.0,8.9 1735.8,24.1 1740.0,9.8 1742.9,19.0 1745.7,8.6 1748.6,24.6 1751.9,5.1 1755.9,22.5 1759.9,9.7 1763.5,23.6 1766.4,19.8 1766.4,36.3 0.0,36.3" fill="rgba(0,255,0,.10)"/>
<path d="M0 0.50H1799M0 4.97H1799M0 9.45H1799M0 13.92H1799M0 18.40H1799M0 22.88H1799M0 27.35H1799M0 31.82H1799M0 36.30H1799" stroke="#808080" stroke-opacity=".28" stroke-width="1" fill="none"/>
<path d="M263.5 0V36.3M563.5 0V36.3M863.5 0V36.3M1163.5 0V36.3M1463.5 0V36.3M1763.5 0V36.3M23.5 28.3V36.3M83.5 28.3V36.3M143.5 28.3V36.3M203.5 28.3V36.3M263.5 28.3V36.3M323.5 28.3V36.3M383.5 28.3V36.3M443.5 28.3V36.3M503.5 28.3V36.3M563.5 28.3V36.3M623.5 28.3V36.3M683.5 28.3V36.3M743.5 28.3V36.3M803.5 28.3V36.3M863.5 28.3V36.3M923.5 28.3V36.3M983.5 28.3V36.3M1043.5 28.3V36.3M1103.5 28.3V36.3M1163.5 28.3V36.3M1223.5 28.3V36.3M1283.5 28.3V36.3M1343.5 28.3V36.3M1403.5 28.3V36.3M1463.5 28.3V36.3M1523.5 28.3V36.3M1583.5 28.3V36.3M1643.5 28.3V36.3M1703.5 28.3V36.3M1763.5 28.3V36.3" stroke="#808080" stroke-opacity=".3" stroke-width="1.100" fill="none"/>
<path d="M1798.5 0V36.3" stroke="#808080" stroke-opacity=".3" stroke-width="1" fill="none"/>
<polyline points="0.0,7.8 3.5,23.4 7.0,6.8 11.0,6.1 15.2,7.1 17.5,21.3 20.2,21.5 24.2,5.2 27.5,22.5 31.8,5.2 34.7,24.8 37.8,5.7 42.1,22.8 45.3,4.5 47.7,24.6 50.7,22.5 53.2,5.4 55.9,24.4 58.6,7.7 61.7,8.0 66.0,22.8 69.0,11.0 71.5,24.5 74.5,7.0 77.0,4.7 80.2,20.6 83.6,5.3 87.6,23.4 91.4,7.2 94.9,17.5 97.2,24.7 101.2,9.6 103.8,22.9 107.8,5.5 112.0,22.5 114.4,4.8 117.8,13.2 121.9,22.3 124.5,9.2 128.6,8.7 131.0,19.8 135.3,15.3 139.0,5.1 142.7,22.5 146.9,6.1 150.7,21.0 154.2,6.5 157.8,8.4 161.5,21.5 165.5,17.7 167.9,6.9 171.2,24.8 174.0,12.5 177.6,8.0 180.8,18.8 184.5,9.9 188.5,22.6 191.5,14.8 195.4,6.4 198.1,17.3 200.8,7.2 204.8,22.4 207.2,19.1 209.6,7.1 211.9,14.3 214.3,23.9 216.9,16.3 220.1,7.9 223.7,20.2 226.4,14.5 230.1,4.9 233.5,22.1 236.6,5.7 240.3,14.3 243.8,24.3 247.3,6.8 250.9,17.5 254.8,5.0 259.1,22.9 263.0,10.0 265.4,21.6 269.3,10.4 273.2,5.6 277.0,10.7 280.4,22.4 283.7,8.8 286.4,5.8 289.8,19.9 292.7,8.5 296.7,19.2 300.1,8.3 302.5,24.2 305.6,8.0 308.0,23.6 312.2,4.9 315.4,21.4 318.6,6.1 321.2,20.8 323.9,24.0 327.4,17.5 330.0,7.2 332.7,22.1 336.0,11.4 339.6,5.7 343.6,23.6 347.5,6.4 350.4,22.8 353.0,16.1 355.8,18.6 359.0,22.7 361.3,6.9 365.4,22.2 368.7,7.1 371.2,9.5 374.6,23.4 377.3,5.3 381.4,9.7 385.6,24.8 389.0,7.4 391.3,23.9 395.1,6.2 397.7,18.2 401.4,5.2 404.5,15.7 407.4,4.8 411.2,19.3 414.9,8.4 418.0,22.4 420.3,5.8 423.9,20.5 427.5,6.2 430.6,21.9 434.8,16.1 438.6,8.5 441.0,24.0 445.1,5.6 449.4,20.4 451.8,4.6 454.2,23.1 457.5,7.6 461.7,8.9 464.6,24.4 467.4,4.7 469.8,17.7 472.9,24.6 475.3,5.7 478.4,24.7 481.2,9.4 485.5,23.1 488.0,6.6 491.4,14.1 495.0,5.1 498.5,24.4 502.7,8.5 505.2,24.1 508.1,9.0 511.5,25.1 515.8,6.6 518.2,12.2 521.3,21.8 523.8,22.6 527.4,6.7 531.2,24.8 533.7,21.1 536.8,8.5 539.9,22.2 543.7,4.7 546.7,19.1 549.2,15.5 552.4,23.4 555.2,19.7 558.1,24.2 561.1,7.0 563.6,18.4 567.7,7.6 570.7,18.9 573.5,9.0 576.5,23.4 580.4,5.9 583.8,24.7 586.1,11.3 589.6,21.6 593.0,20.3 595.4,24.0 598.0,5.3 600.8,24.7 603.9,8.5 607.5,20.0 611.7,5.7 615.3,23.0 619.5,10.4 623.2,22.1 627.0,6.1 629.7,22.7 632.1,5.7 635.7,5.0 639.1,24.0 641.7,24.6 645.2,6.9 648.0,25.0 652.0,7.3 656.0,22.8 659.3,8.0 663.5,7.5 666.3,22.4 669.1,14.5 672.2,5.5 674.8,20.7 678.8,11.3 682.2,17.9 684.5,17.2 688.4,12.1 692.2,14.6 695.4,10.1 699.3,21.7 701.8,5.6 704.4,21.1 707.3,12.6 710.5,7.7 713.6,8.4 717.6,21.9 720.3,4.7 722.7,24.4 725.5,6.6 728.4,21.3 731.1,7.6 735.3,24.6 737.8,10.1 741.5,7.4 744.6,23.9 747.2,13.7 749.6,5.3 753.0,24.5 755.9,10.6 759.0,10.3 762.5,12.9 765.5,24.4 768.6,23.6 771.2,10.5 774.6,23.3 778.9,4.5 782.8,20.7 785.3,6.1 789.0,22.3 791.5,5.8 795.7,21.2 799.8,6.1 803.3,18.5 806.2,24.9 808.8,8.8 811.2,12.3 814.1,24.5 817.2,4.7 820.4,13.5 823.8,24.5 826.7,6.8 830.3,20.1 833.8,8.6 837.4,24.8 841.7,10.0 844.8,18.6 848.1,7.4 851.1,17.4 855.2,20.6 858.6,10.5 861.8,7.7 864.2,22.7 867.3,4.9 871.5,7.8 875.4,19.4 878.8,9.3 882.2,21.7 885.0,24.6 888.9,5.6 892.4,9.4 896.5,17.4 899.7,4.6 903.9,23.0 907.1,10.4 911.4,23.7 913.8,17.4 916.7,6.1 920.4,17.1 924.6,23.0 928.3,5.6 931.1,24.3 935.2,7.6 938.1,23.8 940.6,6.8 943.9,20.8 946.7,5.8 949.6,4.6 952.3,22.4 954.6,4.5 957.9,21.9 961.5,7.6 964.8,20.3 968.2,7.1 971.7,20.0 975.5,5.1 978.3,22.8 980.6,5.4 983.3,9.2 986.6,20.9 989.4,11.0 992.8,21.9 995.4,7.3 998.8,24.3 1001.2,5.7 1004.9,22.9 1007.3,6.0 1009.7,23.4 1014.0,14.3 1017.8,11.8 1021.9,13.6 1024.8,5.3 1028.6,24.7 1031.4,4.7 1034.4,21.4 1037.9,13.7 1041.5,13.0 1045.2,10.3 1048.3,21.4 1052.2,5.7 1054.8,23.4 1058.0,14.4 1062.1,21.7 1064.5,6.2 1067.2,6.5 1071.3,24.7 1075.5,7.6 1079.2,22.2 1081.7,4.9 1085.6,22.0 1087.9,15.9 1090.3,5.6 1093.7,17.2 1096.5,24.2 1099.4,6.1 1102.4,24.7 1105.2,9.3 1108.7,7.2 1113.0,21.6 1116.7,11.0 1120.7,24.1 1123.8,13.5 1126.7,5.6 1129.4,23.1 1132.1,13.0 1135.3,15.8 1139.0,4.8 1141.3,24.3 1143.7,5.4 1147.0,25.1 1151.1,5.2 1154.7,20.6 1157.7,5.4 1161.6,22.6 1164.4,6.8 1167.5,23.4 1170.4,4.9 1173.0,24.4 1175.3,9.4 1178.1,22.7 1181.5,7.9 1184.5,22.9 1188.2,6.4 1192.1,16.2 1195.4,23.3 1198.8,6.5 1201.7,23.4 1204.1,17.2 1206.7,25.0 1209.9,8.9 1212.7,9.5 1215.8,25.0 1218.8,9.7 1222.7,20.6 1226.7,7.0 1229.8,24.8 1233.2,23.0 1235.8,8.6 1240.0,22.8 1243.7,9.5 1246.6,23.4 1248.9,4.6 1252.0,23.1 1255.1,10.5 1259.3,23.7 1261.9,8.4 1266.1,6.2 1268.4,25.0 1272.0,5.0 1274.8,9.8 1278.9,21.4 1281.5,22.9 1284.8,4.5 1287.9,15.4 1291.5,23.8 1295.8,12.2 1299.5,23.1 1302.0,24.8 1304.9,6.8 1307.2,25.0 1311.1,9.3 1315.0,21.6 1319.2,24.4 1321.5,6.9 1324.6,21.8 1328.2,9.5 1332.3,22.6 1335.0,6.2 1338.7,23.7 1341.8,14.8 1344.9,5.6 1349.1,23.0 1351.6,6.5 1355.9,20.8 1358.7,7.3 1361.7,18.9 1365.2,12.3 1368.0,20.2 1371.3,8.7 1375.2,9.2 1378.3,23.7 1381.8,9.0 1385.2,24.2 1387.8,9.9 1391.6,24.9 1395.6,20.5 1398.9,7.1 1402.9,21.1 1407.2,19.1 1410.9,5.8 1414.9,21.7 1418.5,15.4 1422.4,4.8 1426.2,19.2 1430.1,13.3 1432.6,13.0 1436.7,6.0 1440.7,23.7 1443.1,5.7 1446.9,20.6 1450.0,12.9 1452.9,5.3 1455.6,17.0 1458.8,10.4 1463.0,20.7 1465.7,6.4 1468.6,20.1 1472.2,5.9 1475.5,22.0 1479.2,6.9 1482.1,23.8 1485.3,8.6 1488.5,13.9 1491.4,21.6 1494.2,5.7 1496.8,22.9 1500.0,7.3 1503.3,19.4 1505.8,19.3 1509.6,8.4 1511.9,19.2 1514.9,6.5 1519.2,20.6 1522.3,7.5 1524.7,21.0 1528.3,6.8 1530.9,25.0 1533.4,7.2 1536.2,21.4 1540.0,14.4 1542.4,11.1 1545.4,6.9 1547.9,23.9 1551.3,10.1 1554.6,8.2 1557.4,22.9 1560.9,5.3 1563.4,20.2 1566.5,11.7 1570.7,23.2 1574.5,4.6 1577.8,10.3 1580.7,21.1 1583.9,12.0 1586.4,20.1 1589.7,10.5 1593.0,19.9 1595.9,4.7 1599.1,21.9 1602.3,18.7 1604.7,7.7 1607.2,24.1 1610.5,4.5 1613.6,8.3 1617.1,7.5 1620.0,21.8 1622.9,10.0 1625.4,5.1 1629.3,23.0 1633.0,20.4 1636.9,7.1 1640.9,24.4 1643.3,5.4 1647.4,17.5 1650.9,17.5 1654.0,5.6 1658.2,18.0 1661.3,22.5 1663.9,7.0 1666.3,18.7 1670.0,23.8 1674.2,5.6 1676.9,19.0 1680.9,5.9 1684.1,8.0 1687.8,18.4 1690.3,6.7 1693.3,21.3 1696.8,7.8 1699.8,22.3 1704.0,5.3 1707.8,22.8 1710.2,8.3 1713.8,21.5 1717.9,6.9 1720.4,24.9 1722.8,8.3 1725.4,23.4 1729.3,18.1 1732.0,8.9 1735.8,24.1 1740.0,9.8 1742.9,19.0 1745.7,8.6 1748.6,24.6 1751.9,5.1 1755.9,22.5 1759.9,9.7 1763.5,23.6 1766.4,19.8" fill="none" stroke="#00ff00" stroke-width="4.2" stroke-linejoin="round" stroke-linecap="butt"/>
</svg>
<div class="dt" style="left:63px;top:503.8px">04/27/2020 02:07:46 PM</div>
<div class="dt" style="left:922.500px;top:503.8px;word-spacing:4px">0 02:00:00</div>
<div class="dt" style="right:57px;top:503.8px">04/27/2020 04:07:46 PM</div>
<svg style="left:94px;top:526.8px" width="30" height="28" viewBox="0 0 30 28"><path fill-rule="evenodd" d="M14.800 2.200L25.400 .8a1.200 1.200 0 0 1 1.300 1.300L25.600 12L11.500 25.600a1.400 1.400 0 0 1-2 0L1.800 17.800a1.400 1.400 0 0 1 0-2ZM22.500 3.600a1.600 1.600 0 1 0 .01 0Z" fill="#000"/></svg>
<div class="tags" style="left:122px;top:537.8px">Tags</div>
<div class="abs" style="left:96px;top:555.8px;width:60px;height:3px;background:#000"></div>
<div class="gband" style="top:558.8px;height:12px"></div>
<div class="abs" style="left:878px;top:559.3px;width:120px;height:3.500px;background:#b9b9b9"></div>
<div class="abs" style="left:878px;top:566.8px;width:120px;height:3.500px;background:#b9b9b9"></div>
<div class="gband" style="top:572.0999999999999px;height:26.500px"></div>
<div class="cb" style="left:35px;top:578.0999999999999px"></div>
<div class="abs" style="left:54.500px;top:576.0999999999999px;width:14.500px;height:14px;background:#ececec;border:1px solid #d0d0d0"></div>
<div class="abs" style="left:54.500px;top:581.0999999999999px;width:14.500px;height:3px;background:#111"></div>
<div class="th" style="left:75.5px;top:578.5999999999999px">Name<i class="tri"></i></div>
<div class="th" style="left:309.5px;top:577.8999999999999px">Value<i class="tri"></i></div>
<div class="th" style="left:499.5px;top:577.8999999999999px">Units</div>
<div class="th" style="left:689.3px;top:577.8999999999999px">Description<i class="tri"></i></div>
<div class="th" style="left:928.3px;top:577.8999999999999px">Shift</div>
<div class="th" style="left:1049.3px;top:577.8999999999999px">Type<i class="tri"></i></div>
<div class="th" style="left:1239.3px;top:577.8999999999999px">Scale<i class="tri"></i></div>
<div class="th" style="left:1476.7px;top:577.8999999999999px">Plot Min</div>
<div class="th" style="left:1666.7px;top:577.8999999999999px">Plot Max</div>
<div class="row" style="top:598.5999999999999px">
<i class="vl" style="left:61px"></i>
<i class="vl" style="left:275px"></i>
<i class="vl" style="left:294px"></i>
<i class="vl" style="left:485px"></i>
<i class="vl" style="left:676px"></i>
<i class="vl" style="left:915px"></i>
<i class="vl" style="left:1036px"></i>
<i class="vl" style="left:1227px"></i>
<i class="vl" style="left:1465px"></i>
<i class="vl" style="left:1656px"></i>
</div>
<div class="cb" style="left:36px;top:606.0999999999999px;background:#f1eed2;border-color:#cfcdb8"></div>
<div class="abs" style="left:55.500px;top:604.0999999999999px;width:14px;height:14px;background:#fdfad0;border:1px solid #d6d4b8"></div>
<div class="abs" style="left:55.500px;top:609.5999999999999px;width:14px;height:2.600px;background:#00ff00"></div>
<div class="td" style="left:74.500px;top:605.8px">ATCAI</div>
<div class="abs" style="left:288.500px;top:602.3999999999999px;width:17px;height:17.400px;border-radius:50%;background:#5cb350;border:1px solid #c2c2b4"></div>
<div class="num" style="right:1423.5px;top:605.0999999999999px">10.51</div>
<div class="td" style="left:498px;top:605.8px">PSIG</div>
<div class="td lnk" style="left:690px;top:605.8px">Sine Input</div>
<div class="td lnk" style="left:928.500px;top:605.8px">+00:00:00</div>
<div class="td" style="left:1049.500px;top:605.8px">Analog</div>
<div class="td lnk" style="left:1240px;top:605.8px">Auto</div>
<div class="num" style="right:252px;top:605.0999999999999px">-5.00</div>
<div class="num" style="right:61px;top:605.0999999999999px">15.00</div>
</div>

<!-- ===== time navigator ===== -->
<div class="abs" style="left:6px;top:745px;width:48px;height:48px;background:#e5e5e5;border-radius:0 4px 4px 0"></div>
<svg style="left:6px;top:745px" width="48" height="48" viewBox="6 745 48 48">
  <g fill="none" stroke="#4d4541">
    <path stroke-width="2" d="M10.500 764.500A11 11 0 1 1 13 777.500"/>
    <path fill="#4d4541" stroke="none" d="M8 760.500L15.800 765.800L8.200 768.600Z"/>
    <circle cx="20.500" cy="769" r="7.600" fill="#4d4541" stroke="none"/>
    <path fill="#fff" stroke="none" d="M18 764.800L25 769L18 773.200Z"/>
    <path stroke-width="2.600" d="M39.200 757V781M43.800 757V781"/>
    <path fill="#4d4541" stroke="none" d="M47.200 764.800L50.600 769L47.200 773.200Z"/>
  </g>
</svg>
<svg style="left:64px;top:750px" width="40" height="40" viewBox="64 750 40 40">
  <path fill="#3565b0" fill-rule="evenodd" d="M68 756H100a2 2 0 0 1 2 2V786a2 2 0 0 1-2 2H68a2 2 0 0 1-2-2V758a2 2 0 0 1 2-2ZM69 764.200H99.300V785H69Z"/>
  <g fill="#3565b0" stroke="#fff" stroke-width="1.300">
    <rect x="70.000" y="751.400" width="5" height="8.800" rx="2.500"/>
    <rect x="77.700" y="751.400" width="5" height="8.800" rx="2.500"/>
    <rect x="85.400" y="751.400" width="5" height="8.800" rx="2.500"/>
    <rect x="93.300" y="751.400" width="5" height="8.800" rx="2.500"/>
  </g>
  <g fill="#3565b0">
    <rect x="71.600" y="767.300" width="3.400" height="3.400"/><rect x="78.900" y="767.300" width="3.400" height="3.400"/><rect x="85.800" y="767.300" width="3.400" height="3.400"/><rect x="92.900" y="767.300" width="3.400" height="3.400"/>
    <rect x="71.600" y="772.800" width="3.400" height="3.400"/><rect x="78.900" y="772.800" width="3.400" height="3.400"/><rect x="85.800" y="772.800" width="3.400" height="3.400"/><rect x="92.900" y="772.800" width="3.400" height="3.400"/>
    <rect x="71.600" y="778.700" width="3.400" height="3.400"/><rect x="78.900" y="778.700" width="3.400" height="3.400"/><rect x="85.800" y="778.700" width="3.400" height="3.400"/><rect x="92.900" y="778.700" width="3.400" height="3.400"/>
  </g>
</svg>

<!-- track -->
<div class="abs" style="left:137px;top:747px;width:1682px;height:47px;background:#fff;border-top:1.500px solid #858585;border-bottom:2.500px solid #8a8a8a"></div>
<div class="abs" style="left:114px;top:747px;width:24px;height:48px;border-radius:5px 0 0 5px;background:linear-gradient(#6b9be2,#3a67b8)"></div>
<div class="abs" style="left:1818px;top:747px;width:24px;height:48px;border-radius:0 5px 5px 0;background:linear-gradient(#6b9be2,#3a67b8)"></div>
<svg style="left:114px;top:747px" width="1730" height="48" viewBox="114 747 1730 48">
  <path fill="#fff" d="M120 770.800L130 763.200V778.400Z"/>
  <path fill="#fff" d="M1836 770.800L1826 763.200V778.400Z"/>
</svg>
<i class="tick" style="left:347px"></i><i class="tick" style="left:557px"></i><i class="tick" style="left:767px"></i><i class="tick" style="left:977px"></i><i class="tick" style="left:1187px"></i><i class="tick" style="left:1397px"></i><i class="tick" style="left:1607px"></i>
<div class="tl" style="left:350px">02:05</div>
<div class="tl" style="left:560px">04:05</div>
<div class="tl" style="left:770px">06:05</div>
<div class="tl" style="left:980px">08:05</div>
<div class="tl" style="left:1400px">12:05</div>
<div class="tl" style="left:1610px">14:05</div>

<!-- slider window -->
<div class="abs" style="left:1046px;top:744px;width:210px;height:53px;border-radius:3px;background:#8f8f8f;box-shadow:inset 0 0 0 1px #838383"></div>
<div class="abs" style="left:1047px;top:745px;width:14.500px;height:51px;background:linear-gradient(90deg,#8a8a8a,#a8a8a8 50%,#8a8a8a)"></div>
<div class="abs" style="left:1241.500px;top:745px;width:13.500px;height:51px;background:linear-gradient(90deg,#8a8a8a,#a8a8a8 50%,#8a8a8a)"></div>
<div class="abs" style="left:1062px;top:748px;width:179.500px;height:44.500px;background:#fff"></div>
<i class="tick" style="left:1187px;height:44.500px"></i>
<div class="tl" style="left:1190px;font-weight:bold;color:#a2a2a2;font-size:11.500px">10:05</div>
<svg style="left:1046px;top:744px" width="210" height="53" viewBox="1046 744 210 53">
  <path stroke="#767676" stroke-width="1.100" fill="none" d="M1052 763V780M1056.500 763V780M1247 763V780M1251.400 763V780"/>
</svg>

<!-- clock -->
<div class="abs" style="left:1854px;top:753px;width:36px;height:36px;border-radius:3px;background:#fe0000"></div>
<svg style="left:1854px;top:753px" width="36" height="36" viewBox="1854 753 36 36">
  <circle cx="1872" cy="771" r="12.500" fill="none" stroke="#fff" stroke-width="3"/>
  <path fill="none" stroke="#fff" stroke-width="2.600" d="M1872 762V772.400H1880.500"/>
</svg>

<!-- range buttons -->
<div class="rbtn on" style="left:755px">2hr</div>
<div class="rbtn" style="left:815px">4hr</div>
<div class="rbtn" style="left:875px">8hr</div>
<div class="rbtn" style="left:935px">1d</div>
<div class="rbtn" style="left:995px">1wk</div>
<div class="rbtn" style="left:1055px">4wk</div>
<div class="rbtn" style="left:1115px">1yr</div>

<!-- red annotation rectangle -->
<div class="abs" style="left:997px;top:703px;width:317px;height:131px;border:5px solid #ed1c24"></div>

<!-- bottom strip -->
<div class="abs" style="left:0;top:870px;width:1920px;height:3px;background:#000"></div>
<div class="abs" style="left:296.500px;top:870.500px;width:72px;height:2.500px;background:#333"></div>

</body>
</html>
